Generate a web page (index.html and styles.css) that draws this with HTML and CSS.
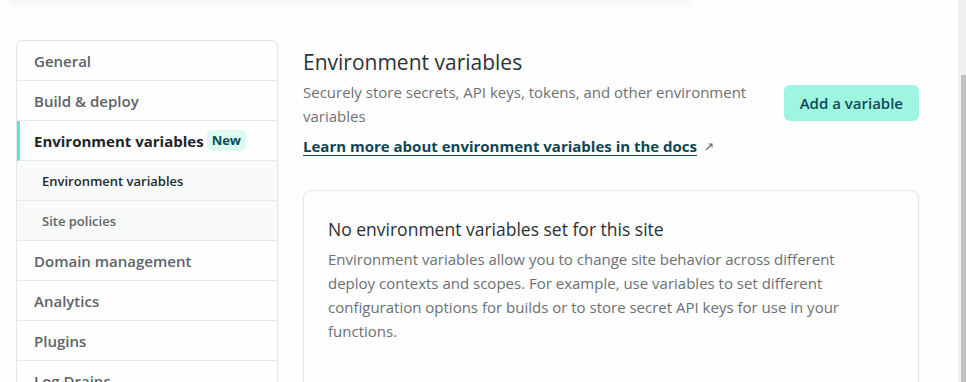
FILE: index.html
```html
<!DOCTYPE html>
<html>
<head>
  <title>Environment variables</title>
  <link rel="stylesheet" href="styles.css">
</head>
<body>
  <div id="window">
    <div id="page">
      <div class="top-card"></div>
      <div id="layout">
        <nav id="sidebar">
          <a class="item">General</a>
          <a class="item">Build &amp; deploy</a>
          <a class="item active">Environment variables <span class="badge">New</span></a>
          <a class="item sub current">Environment variables</a>
          <a class="item sub">Site policies</a>
          <a class="item">Domain management</a>
          <a class="item">Analytics</a>
          <a class="item">Plugins</a>
          <a class="item">Log Drains</a>
        </nav>
        <main id="content">
          <div class="header">
            <div class="intro">
              <h1>Environment variables</h1>
              <p class="lead">Securely store secrets, API keys, tokens, and other environment variables</p>
              <a class="docs">Learn more about environment variables in the docs</a>
              <svg class="ext" width="10" height="10" viewBox="0 0 10 10">
                <path d="M2 8 L8 2 M4.5 2 H8 V5.5" fill="none" stroke="#5a6b73" stroke-width="1.1"/>
              </svg>
            </div>
            <button class="add-btn">Add a variable</button>
          </div>
          <div class="empty-card">
            <h2>No environment variables set for this site</h2>
            <p>Environment variables allow you to change site behavior across different deploy contexts and scopes. For example, use variables to set different configuration options for builds or to store secret API keys for use in your functions.</p>
          </div>
        </main>
      </div>
    </div>
    <div id="scrollbar"><div class="thumb"></div></div>
  </div>
</body>
</html>
```

FILE: styles.css
```css
html, body {
  margin: 0;
  padding: 0;
  height: 382px;
  overflow: hidden;
  background: #fefefe;
  font-family: "Open Sans", "Noto Sans", sans-serif;
}

#window {
  display: flex;
  height: 382px;
}

#page {
  flex: 1;
  overflow: hidden;
}

.top-card {
  height: 0;
  margin: 0 268px 0 10px;
  box-shadow: 0 1px 10px 2px rgba(0, 0, 0, 0.10);
}

#layout {
  display: flex;
  gap: 25px;
  padding: 40px 39px 0 16px;
}

#sidebar {
  width: 260px;
  flex-shrink: 0;
  border: 1px solid #e3e6e8;
  border-radius: 6px;
  display: flex;
  flex-direction: column;
  align-self: flex-start;
}

.item {
  height: 39px;
  display: flex;
  align-items: center;
  padding-left: 17px;
  border-bottom: 1px solid #e6e8ea;
  font-size: 15px;
  font-weight: 600;
  color: #5d6368;
}

.item.active {
  color: #1f2428;
  font-weight: 700;
  border-left: 3px solid #5fe3cb;
  padding-left: 14px;
}

.item.sub {
  background: #f9fafa;
  font-size: 13px;
  padding-left: 25px;
  color: #5d6368;
}

.item.sub.current {
  color: #24292d;
}

.badge {
  margin-left: 3px;
  background: #dcfaf0;
  color: #0d4d58;
  font-size: 13px;
  font-weight: 700;
  padding: 1px 5px 2px;
  border-radius: 5px;
}

#content {
  flex: 1;
}

.header {
  display: flex;
  align-items: flex-start;
  gap: 30px;
}

.intro {
  flex: 1;
}

h1 {
  margin: 8px 0 0;
  font-size: 21px;
  font-weight: 400;
  color: #2d3236;
  line-height: 28px;
}

.lead {
  margin: 4px 0 0;
  font-size: 15px;
  line-height: 24px;
  color: #6c7176;
}

.docs {
  display: inline-block;
  margin-top: 8px;
  font-size: 15px;
  font-weight: 700;
  color: #0e4653;
  text-decoration: underline;
  text-underline-offset: 3px;
}

.ext {
  margin-left: 3px;
}

.add-btn {
  margin-top: 45px;
  border: none;
  border-radius: 6px;
  background: #9ef6e0;
  color: #0f4859;
  font-family: inherit;
  font-size: 15px;
  font-weight: 600;
  padding: 0 16px;
  height: 36px;
}

.empty-card {
  margin-top: 33px;
  border: 1px solid #e4e7e9;
  border-radius: 8px;
  box-shadow: 0 1px 3px rgba(0, 0, 0, 0.05);
  padding: 25px 24px 56px;
}

h2 {
  margin: 0;
  font-size: 17.5px;
  font-weight: 400;
  color: #2b3034;
  line-height: 26px;
}

.empty-card p {
  max-width: 540px;
  margin: 5px 0 0;
  font-size: 15px;
  line-height: 24px;
  color: #6b7075;
}

#scrollbar {
  width: 8px;
  background: #f0f0f0;
  display: flex;
  justify-content: flex-end;
}

.thumb {
  width: 5px;
  height: 100%;
  margin-top: 75px;
  background: #c1c1c1;
}
```
